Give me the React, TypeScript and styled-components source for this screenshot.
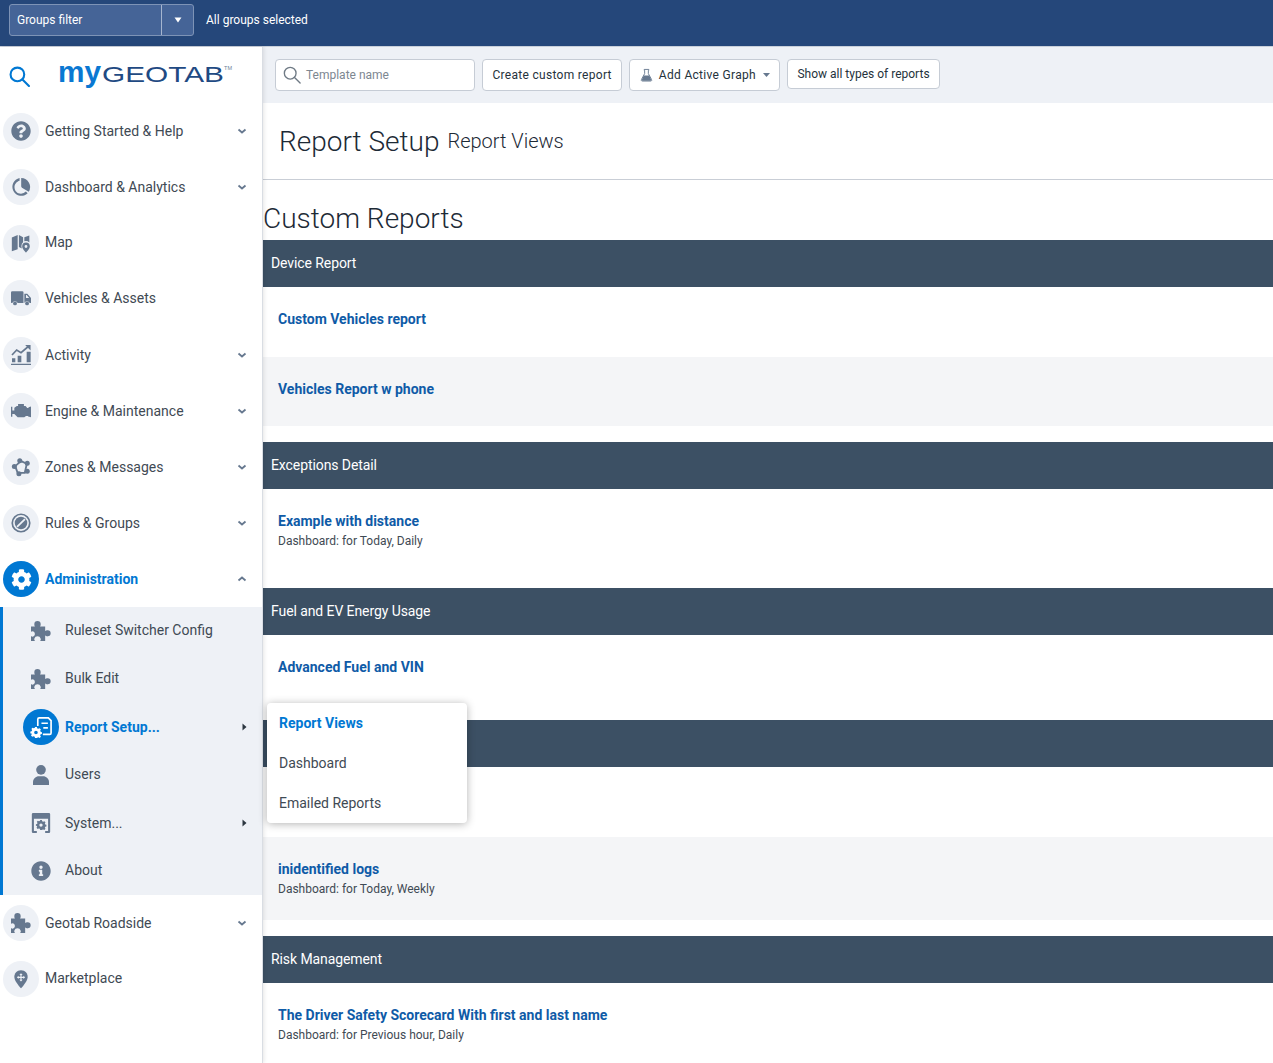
import React from "react";
import styled, { createGlobalStyle } from "styled-components";
import { FaQuestionCircle, FaCog, FaInfoCircle } from "react-icons/fa";

const Global = createGlobalStyle`
  html, body { margin: 0; padding: 0; height: 100%; overflow: hidden; background: #fff; }
  body { font-family: Roboto, "Liberation Sans", sans-serif; color: #25323c; }
  * { box-sizing: border-box; }
`;

const Page = styled.div`
  display: flex;
  flex-direction: column;
  height: 1063px;
  overflow: hidden;
`;
const TopBar = styled.header`
  display: flex;
  align-items: flex-start;
  flex: 0 0 46px;
  height: 46px;
  padding: 4px 0 0 9px;
  background: #25477a;
  color: #fff;
  font-size: 12px;
`;
const FilterButton = styled.div`
  display: flex;
  width: 185px;
  height: 32px;
  border: 1px solid #7d93b6;
  border-radius: 3px;
  background: #456497;
`;
const FilterLabel = styled.div`
  flex: 1;
  display: flex;
  align-items: center;
  padding-left: 7px;
`;
const FilterCaret = styled.div`
  flex: 0 0 32px;
  display: flex;
  align-items: center;
  justify-content: center;
  border-left: 1px solid #a5b5cf;
`;
const TopNote = styled.div`
  margin-left: 12px;
  line-height: 32px;
`;
const Body = styled.div`
  flex: 1;
  display: flex;
  min-height: 0;
  border-top: 1px solid #c9d0da;
`;
const Sidebar = styled.nav`
  flex: 0 0 263px;
  border-right: 1px solid #d9dde3;
  box-shadow: 1px 0 4px rgba(0, 0, 0, 0.1);
  background: #fff;
  z-index: 1;
`;
const Brand = styled.div`
  display: flex;
  align-items: center;
  height: 56px;
  padding-left: 9px;
  color: #0078d3;
`;
const BrandSearch = styled.span`
  display: flex;
  margin-top: 2px;
`;
const Logo = styled.svg`
  margin-left: 28px;
  display: block;
`;
const NavItem = styled.div<{ $h?: number; $active?: boolean }>`
  display: flex;
  align-items: center;
  height: ${(p) => p.$h ?? 56}px;
  padding: 0 15px 0 3px;
  font-size: 14px;
  font-weight: ${(p) => (p.$active ? 700 : 400)};
  color: ${(p) => (p.$active ? "#0078d3" : "#3f4a54")};
`;
const IconCircle = styled.span<{ $active?: boolean }>`
  flex: 0 0 36px;
  width: 36px;
  height: 36px;
  border-radius: 50%;
  display: flex;
  align-items: center;
  justify-content: center;
  margin-right: 6px;
  background: ${(p) => (p.$active ? "#0078d3" : "#eef1f6")};
  color: ${(p) => (p.$active ? "#fff" : "#66788f")};
`;
const NavLabel = styled.span<{ $up?: boolean }>`
  flex: 1;
  white-space: nowrap;
  padding-bottom: ${(p) => (p.$up ? "2px" : "0")};
`;
const SubMenu = styled.div`
  height: 288px;
  border-left: 3px solid #0078d3;
  background: #eef1f6;
`;
const SubItem = styled.div<{ $active?: boolean }>`
  display: flex;
  align-items: center;
  height: 48px;
  padding: 0 15px 0 20px;
  font-size: 14px;
  font-weight: ${(p) => (p.$active ? 700 : 400)};
  color: ${(p) => (p.$active ? "#0078d3" : "#3f4a54")};
`;
const SubIconCell = styled.span<{ $active?: boolean }>`
  flex: 0 0 36px;
  height: 36px;
  border-radius: 50%;
  display: flex;
  align-items: center;
  justify-content: center;
  margin-right: 6px;
  background: ${(p) => (p.$active ? "#0078d3" : "transparent")};
  color: ${(p) => (p.$active ? "#fff" : "#66788f")};
`;
const Content = styled.main`
  flex: 1;
  min-width: 0;
  position: relative;
`;
const Toolbar = styled.div`
  display: flex;
  align-items: flex-start;
  gap: 7px;
  height: 56px;
  padding: 12px 0 0 12px;
  background: #eef1f6;
`;
const SearchBox = styled.div`
  display: flex;
  align-items: center;
  gap: 5px;
  width: 200px;
  height: 32px;
  padding: 0 7px;
  background: #fff;
  border: 1px solid #c6ccd5;
  border-radius: 4px;
  color: #7d8791;
  font-size: 12px;
`;
const ToolButton = styled.div<{ $h?: number; $spacing?: number; $pad?: number }>`
  display: flex;
  align-items: center;
  height: ${(p) => p.$h ?? 32}px;
  padding: 0 ${(p) => p.$pad ?? 9.5}px;
  gap: 6px;
  background: #fff;
  border: 1px solid #c6ccd5;
  border-radius: 4px;
  color: #25323c;
  font-size: 12px;
  letter-spacing: ${(p) => p.$spacing ?? 0.3}px;
  white-space: nowrap;
`;
const DownCaret = styled.svg`
  margin-left: 1px;
`;
const PageHead = styled.div`
  display: flex;
  align-items: center;
  gap: 8px;
  height: 77px;
  padding-left: 16px;
  border-bottom: 1px solid #c9ced6;
  font-weight: 300;
  color: #1d2a36;
`;
const PageTitle = styled.span`
  font-size: 28px;
`;
const PageSub = styled.span`
  font-size: 20px;
`;
const Heading = styled.h2`
  margin: 0;
  height: 60px;
  padding: 22px 0 0;
  font-size: 28px;
  line-height: 33px;
  font-weight: 300;
  color: #1d2a36;
`;
const SectionBar = styled.div`
  height: 47px;
  display: flex;
  align-items: center;
  padding: 0 0 2px 8px;
  background: #3c5064;
  color: #fff;
  font-size: 14px;
  letter-spacing: -0.09px;
`;
const Section = styled.section`
  margin-bottom: 16px;
`;
const Row = styled.div<{ $h: number; $alt: boolean }>`
  height: ${(p) => p.$h}px;
  padding: 22px 15px 0;
  background: ${(p) => (p.$alt ? "#f4f5f7" : "#fff")};
`;
const RowLink = styled.div`
  font-size: 14px;
  line-height: 20px;
  font-weight: 700;
  color: #0f5ba7;
`;
const RowSub = styled.div`
  font-size: 12px;
  line-height: 20px;
  color: #3f4a54;
`;
const Popover = styled.div`
  position: absolute;
  left: 4px;
  top: 656px;
  width: 200px;
  height: 120px;
  background: #fff;
  border-radius: 4px;
  box-shadow: 0 1px 8px rgba(0, 0, 0, 0.3);
  z-index: 2;
`;
const PopItem = styled.div<{ $active?: boolean }>`
  display: flex;
  align-items: center;
  height: 40px;
  padding-left: 12px;
  font-size: 14px;
  font-weight: ${(p) => (p.$active ? 700 : 400)};
  color: ${(p) => (p.$active ? "#0078d3" : "#3f4a54")};
`;

const Svg = ({ size = 20, children }: { size?: number; children: React.ReactNode }) => (
  <svg width={size} height={size} viewBox="0 0 24 24" fill="currentColor" style={{ overflow: "visible" }}>{children}</svg>
);
const Chevron = ({ up }: { up?: boolean }) => (
  <svg width="10" height="8" viewBox="0 0 10 8">
    <polyline points={up ? "1.5,5.5 5,2.5 8.5,5.5" : "1.5,2.5 5,5.5 8.5,2.5"} fill="none" stroke="#66788f" strokeWidth="1.8" />
  </svg>
);
const CaretRight = () => (
  <svg width="6" height="8" viewBox="0 0 6 8"><path d="M1.500 0.500 5.500 4 1.500 7.500z" fill="#2c3640" /></svg>
);

const PuzzleIcon = () => (
  <Svg>
    <path transform="translate(-1 0)" d="M1 6.500H5.800C5 5.500 5 4.500 5 3.500a3.800 3.500 0 0 1 7.600 0C12.600 4.500 12.600 5.500 11.800 6.500H18V12C19 11.200 20 11 21 11.200a3.600 3.600 0 0 1 0 7.200C20 18.600 19 18.200 18 17.500V24H12C12.800 23 13 22 12.500 21a3.800 3.500 0 0 0-7.400 0C4.700 22 5 23 5.800 24H1V18C2 19 3.500 19 4.500 18a3.300 3.300 0 0 0 0-5C3.500 12 2 12 1 13z" />
  </Svg>
);
const PieIcon = () => (
  <Svg>
    <path d="M10.300 1.200A10.800 10.800 0 1 0 20 19.500L17.800 17.500A7.800 7.800 0 0 1 12 20 C7.500 20 4.200 16.500 4.200 12.200 4.200 8.500 6.800 5.300 10.300 4.400z" />
    <path d="M12.200 1.200A10.800 10.800 0 0 1 21.200 17.800L13.200 12.800C12.500 12.300 12.200 11.800 12.200 11z" />
  </Svg>
);
const MapIcon = () => (
  <Svg>
    <path d="M1 5.500 8 2.500v17L1 22z" />
    <path d="M9.500 2.500 14.500 5v6.200a6 6 0 0 0-2 4.300c0 1 .2 2 .6 3l-3.600-1.600z" />
    <path d="M16 5.200 22 3v8.300A6 6 0 0 0 16 10z" />
    <path fillRule="evenodd" d="M18 11.500a4.600 4.600 0 0 1 4.600 4.600C22.600 19 18 23.500 18 23.500S13.400 19 13.400 16.100A4.600 4.600 0 0 1 18 11.500zm0 3a1.700 1.700 0 1 0 0 3.400 1.700 1.700 0 0 0 0-3.400z" />
  </Svg>
);
const TruckIcon = () => (
  <Svg>
    <path d="M0 5.500A1.500 1.500 0 0 1 1.500 4h12A1.500 1.500 0 0 1 15 5.500V18H8a3.500 3.500 0 0 0-6.500 0H1A1 1 0 0 1 0 17z" />
    <path fillRule="evenodd" d="M16 7h3.500L24 12v6h-1.500a3.500 3.500 0 0 0-6.500 0zm2 1.500V12h3.800l-3-3.500z" />
    <circle cx="4.800" cy="18.500" r="2.300" />
    <circle cx="19.300" cy="18.500" r="2.300" />
  </Svg>
);
const ActivityIcon = () => (
  <Svg>
    <path d="M0 22.600h24v1.400H0zM1.200 16h4v4.800h-4zM8 13h4.400v7.800H8zM18.800 8h4.800v12.800h-4.800z" />
    <polyline points="1.200,12 6.800,6 12,9.200 20.800,1.800" fill="none" stroke="currentColor" strokeWidth="2" />
    <path d="M17 0h6.500v6.500z" />
  </Svg>
);
const EngineIcon = () => (
  <Svg>
    <path d="M0 7h1.600v4.500H4V8l3-2h1.500V3.500h7V6h2l2 2.500h1.500V7.500L24 6.500V19.500l-3.500-1V18H18l-2 1.500H8L4 15.500H1.600V19H0z" />
  </Svg>
);
const ZonesIcon = () => (
  <Svg>
    <path d="M12 5 5 11l3 8h8.500L19 8z" fill="none" stroke="currentColor" strokeWidth="2.200" />
    <circle cx="10.500" cy="4.500" r="3" />
    <circle cx="19.500" cy="7.500" r="3" />
    <circle cx="4" cy="11.500" r="3" />
    <circle cx="19.500" cy="17" r="3" />
    <circle cx="9.500" cy="20" r="3" />
  </Svg>
);
const RulesIcon = () => (
  <Svg>
    <circle cx="12" cy="12" r="10.500" fill="none" stroke="currentColor" strokeWidth="2" />
    <circle cx="12" cy="12" r="7.500" />
    <path d="M6.500 16 16 6.500l1.500 1.500L8 17.500z" fill="#eef1f6" />
  </Svg>
);
const gearPath =
  "M-1 -6h2l.4 1.500 1.200.5 1.400-.7 1.400 1.400-.8 1.300.5 1.200 1.400.4v2l-1.400.4-.5 1.200.8 1.300-1.400 1.400-1.400-.7-1.200.5L1 6h-2l-.4-1.500-1.200-.5-1.400.7-1.400-1.400.8-1.300-.5-1.200L-6.100 1v-2l1.400-.4.5-1.200-.8-1.300L-3.800 -5.300l1.400.7 1.200-.5zM0 -2a2 2 0 1 0 0 4 2 2 0 0 0 0-4z";
const ReportIcon = () => (
  <Svg size={22}>
    <path d="M8.500 11V3.500A1.500 1.500 0 0 1 10 2h10l3 3v13.500a1.500 1.500 0 0 1-1.500 1.500H14" fill="none" stroke="currentColor" strokeWidth="1.800" />
    <path d="M12.500 7h7v1.800h-7zM14.500 12h5v1.800h-5z" />
    <path transform="translate(6.500 18)" fillRule="evenodd" d={gearPath} />
  </Svg>
);
const UserIcon = () => (
  <Svg>
    <circle cx="12" cy="5.800" r="5.800" />
    <path d="M2.400 24v-3.500c0-4 3.500-7 7-7h5.200c3.500 0 7 3 7 7V24z" />
  </Svg>
);
const SystemIcon = () => (
  <Svg>
    <path fillRule="evenodd" d="M1 1.500A1.500 1.500 0 0 1 2.500 0h19A1.500 1.500 0 0 1 23 1.500v21a1.500 1.500 0 0 1-1.500 1.500H17v-2.500h3.500V7h-17v14.500H7V24H2.500A1.500 1.500 0 0 1 1 22.500z" />
    <path transform="translate(12 14.500)" fillRule="evenodd" d={gearPath} />
  </Svg>
);
const MarketIcon = () => (
  <Svg>
    <path d="M12 1.500C6.800 1.500 4 5.300 4 9.500c0 5.500 8 13.500 8 13.500s8-8 8-13.500c0-4.200-2.800-8-8-8z" />
    <path d="M12 5l2 2.200h-1.300v2.100h2.100V8L17 10l-2.200 2v-1.300h-2.100v2.100H14L12 15l-2-2.200h1.300v-2.100H9.200V12L7 10l2.200-2v1.300h2.100V7.200H10z" fill="#eef1f6" />
  </Svg>
);
const Flask = () => (
  <svg width="13" height="14" viewBox="0 0 14 14">
    <path d="M4.500 1h5v1H9v3.500l3.500 6.500a1 1 0 0 1-.9 1.500H2.400a1 1 0 0 1-.9-1.500L5 5.500V2h-.5z" fill="none" stroke="#66788f" strokeWidth="1" />
    <path d="M4 7.500h6l2 4.500a1 1 0 0 1-1 1.200H3a1 1 0 0 1-1-1.200z" fill="#66788f" />
  </svg>
);
const SearchGlyph = ({ size, color, w }: { size: number; color: string; w: number }) => (
  <svg width={size} height={size} viewBox="0 0 20 20" fill="none" stroke={color} strokeWidth={w}>
    <circle cx="8" cy="8" r="6.500" />
    <path d="M12.800 12.800 19 19" strokeLinecap="round" />
  </svg>
);

const TopNav: { label: string; icon: React.ReactNode; chevron: boolean; h: number; up?: boolean }[] = [
  { label: "Getting Started & Help", icon: <FaQuestionCircle size={20} />, chevron: true, h: 56 },
  { label: "Dashboard & Analytics", icon: <PieIcon />, chevron: true, h: 56 },
  { label: "Map", icon: <MapIcon />, chevron: false, h: 55, up: true },
  { label: "Vehicles & Assets", icon: <TruckIcon />, chevron: false, h: 56 },
  { label: "Activity", icon: <ActivityIcon />, chevron: true, h: 57 },
  { label: "Engine & Maintenance", icon: <EngineIcon />, chevron: true, h: 56 },
  { label: "Zones & Messages", icon: <ZonesIcon />, chevron: true, h: 56 },
  { label: "Rules & Groups", icon: <RulesIcon />, chevron: true, h: 56 },
];

const subNav: { label: string; icon: React.ReactNode; caret?: boolean; active?: boolean; up?: boolean }[] = [
  { label: "Ruleset Switcher Config", icon: <PuzzleIcon />, up: true },
  { label: "Bulk Edit", icon: <PuzzleIcon />, up: true },
  { label: "Report Setup...", icon: <ReportIcon />, caret: true, active: true },
  { label: "Users", icon: <UserIcon />, up: true },
  { label: "System...", icon: <SystemIcon />, caret: true },
  { label: "About", icon: <FaInfoCircle size={20} />, up: true },
];

const sections: { title: string; rows: { name: string; sub?: string; h: number }[] }[] = [
  {
    title: "Device Report",
    rows: [
      { name: "Custom Vehicles report", h: 70 },
      { name: "Vehicles Report w phone", h: 69 },
    ],
  },
  { title: "Exceptions Detail", rows: [{ name: "Example with distance", sub: "Dashboard: for Today, Daily", h: 83 }] },
  { title: "Fuel and EV Energy Usage", rows: [{ name: "Advanced Fuel and VIN", h: 69 }] },
  {
    title: "",
    rows: [
      { name: "", h: 70 },
      { name: "inidentified logs", sub: "Dashboard: for Today, Weekly", h: 83 },
    ],
  },
  {
    title: "Risk Management",
    rows: [{ name: "The Driver Safety Scorecard With first and last name", sub: "Dashboard: for Previous hour, Daily", h: 83 }],
  },
];

export default function App() {
  return (
    <Page>
      <Global />
      <TopBar>
        <FilterButton>
          <FilterLabel>Groups filter</FilterLabel>
          <FilterCaret>
            <svg width="8" height="6" viewBox="0 0 8 6"><path d="M0.500 0.500h7L4 5.500z" fill="#fff" /></svg>
          </FilterCaret>
        </FilterButton>
        <TopNote>All groups selected</TopNote>
      </TopBar>
      <Body>
        <Sidebar>
          <Brand>
            <BrandSearch><SearchGlyph size={21} color="#0078d3" w={2} /></BrandSearch>
            <Logo width="178" height="36" viewBox="0 0 178 36">
              <text x="0" y="24.500" fontFamily="'Liberation Sans', sans-serif" fontWeight="700" fontSize="29" fill="#0a78d2" textLength="43" lengthAdjust="spacingAndGlyphs">my</text>
              <text x="44" y="25" fontFamily="'Liberation Sans', sans-serif" fontSize="21.500" fill="#1f4a83" textLength="122" lengthAdjust="spacingAndGlyphs">GEOTAB</text>
              <text x="166" y="13" fontFamily="'Liberation Sans', sans-serif" fontSize="5.500" fill="#6c7f98" textLength="8" lengthAdjust="spacingAndGlyphs">TM</text>
            </Logo>
          </Brand>
          {TopNav.map((n) => (
            <NavItem key={n.label} $h={n.h}>
              <IconCircle>{n.icon}</IconCircle>
              <NavLabel $up={n.up}>{n.label}</NavLabel>
              {n.chevron && <Chevron />}
            </NavItem>
          ))}
          <NavItem $active>
            <IconCircle $active><FaCog size={21} /></IconCircle>
            <NavLabel>Administration</NavLabel>
            <Chevron up />
          </NavItem>
          <SubMenu>
            {subNav.map((s) => (
              <SubItem key={s.label} $active={s.active}>
                <SubIconCell $active={s.active}>{s.icon}</SubIconCell>
                <NavLabel $up={s.up}>{s.label}</NavLabel>
                {s.caret && <CaretRight />}
              </SubItem>
            ))}
          </SubMenu>
          <NavItem>
            <IconCircle><PuzzleIcon /></IconCircle>
            <NavLabel>Geotab Roadside</NavLabel>
            <Chevron />
          </NavItem>
          <NavItem $h={55}>
            <IconCircle><MarketIcon /></IconCircle>
            <NavLabel $up>Marketplace</NavLabel>
          </NavItem>
        </Sidebar>
        <Content>
          <Toolbar>
            <SearchBox>
              <SearchGlyph size={18} color="#6f7a85" w={1.500} />
              Template name
            </SearchBox>
            <ToolButton>Create custom report</ToolButton>
            <ToolButton>
              <Flask />
              Add Active Graph
              <DownCaret width="7" height="4" viewBox="0 0 7 4"><path d="M0 0h7L3.500 4z" fill="#66788f" /></DownCaret>
            </ToolButton>
            <ToolButton $h={30} $spacing={0} $pad={9}>Show all types of reports</ToolButton>
          </Toolbar>
          <PageHead>
            <PageTitle>Report Setup</PageTitle>
            <PageSub>Report Views</PageSub>
          </PageHead>
          <Heading>Custom Reports</Heading>
          {sections.map((s, si) => (
            <Section key={si}>
              <SectionBar>{s.title}</SectionBar>
              {s.rows.map((r, i) => (
                <Row key={i} $h={r.h} $alt={i % 2 === 1}>
                  <RowLink>{r.name}</RowLink>
                  {r.sub && <RowSub>{r.sub}</RowSub>}
                </Row>
              ))}
            </Section>
          ))}
          <Popover>
            <PopItem $active>Report Views</PopItem>
            <PopItem>Dashboard</PopItem>
            <PopItem>Emailed Reports</PopItem>
          </Popover>
        </Content>
      </Body>
    </Page>
  );
}
